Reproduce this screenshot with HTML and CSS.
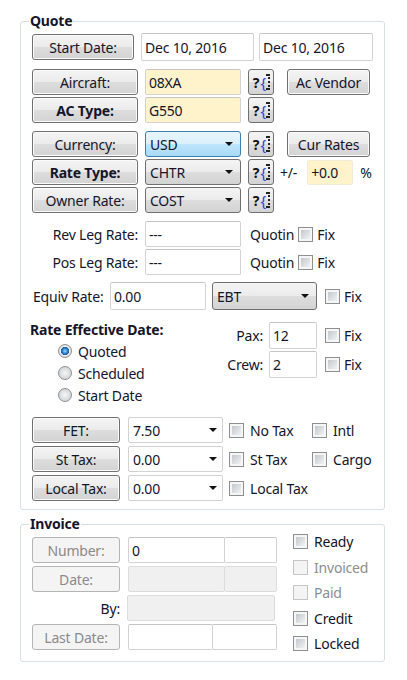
FILE: index.html
```html
<!DOCTYPE html>
<html lang="en">
<head>
    <meta charset="UTF-8">
    <meta name="viewport" content="width=device-width, initial-scale=1.0">
    <title>Quote</title>
    <link rel="stylesheet" href="styles.css">
</head>
<body>
    <fieldset class="group quote">
        <legend>Quote</legend>

        <div class="row">
            <button class="btn w-btn">Start Date:</button>
            <input class="txt w-date" value="Dec 10, 2016">
            <input class="txt w-date2" value="Dec 10, 2016">
        </div>

        <div class="stack sec">
            <div class="row">
                <button class="btn w-btn">Aircraft:</button>
                <input class="txt yellow w-field" value="08XA">
                <button class="qbtn">?<span class="brace">{</span><span class="dots"></span></button>
                <button class="btn w-side">Ac Vendor</button>
            </div>
            <div class="row">
                <button class="btn w-btn bold">AC Type:</button>
                <input class="txt yellow w-field" value="G550">
                <button class="qbtn">?<span class="brace">{</span><span class="dots"></span></button>
            </div>
        </div>

        <div class="stack sec">
            <div class="row">
                <button class="btn w-btn">Currency:</button>
                <div class="combo focus w-field"><span>USD</span><i class="arrow"></i></div>
                <button class="qbtn">?<span class="brace">{</span><span class="dots"></span></button>
                <button class="btn w-side">Cur Rates</button>
            </div>
            <div class="row">
                <button class="btn w-btn bold">Rate Type:</button>
                <div class="combo w-field"><span>CHTR</span><i class="arrow"></i></div>
                <button class="qbtn">?<span class="brace">{</span><span class="dots"></span></button>
                <span class="pm">+/-</span>
                <input class="txt yellow w-pct" value="+0.0">
                <span class="pct">%</span>
            </div>
            <div class="row">
                <button class="btn w-btn">Owner Rate:</button>
                <div class="combo w-field"><span>COST</span><i class="arrow"></i></div>
                <button class="qbtn">?<span class="brace">{</span><span class="dots"></span></button>
            </div>
        </div>

        <div class="stack sec">
            <div class="row">
                <label class="lbl w-btn">Rev Leg Rate:</label>
                <input class="txt w-field" value="---">
                <span class="quotin">Quotin</span>
                <span class="cb"></span><span class="cb-text">Fix</span>
            </div>
            <div class="row">
                <label class="lbl w-btn">Pos Leg Rate:</label>
                <input class="txt w-field" value="---">
                <span class="quotin">Quotin</span>
                <span class="cb"></span><span class="cb-text">Fix</span>
            </div>
        </div>

        <div class="row equiv">
            <label class="equiv-lbl">Equiv Rate:</label>
            <input class="txt w-equiv" value="0.00">
            <div class="combo w-ebt"><span>EBT</span><i class="arrow"></i></div>
            <span class="cb ml8"></span><span class="cb-text">Fix</span>
        </div>

        <div class="rate-block">
            <div class="rate-left">
                <div class="rate-title">Rate Effective Date:</div>
                <div class="radios">
                    <div class="radio-row"><span class="radio on"></span>Quoted</div>
                    <div class="radio-row"><span class="radio"></span>Scheduled</div>
                    <div class="radio-row"><span class="radio"></span>Start Date</div>
                </div>
            </div>
            <div class="stack rate-right">
                <div class="row">
                    <label class="lbl w-small">Pax:</label>
                    <input class="txt w-pax" value="12">
                    <span class="cb ml8"></span><span class="cb-text">Fix</span>
                </div>
                <div class="row">
                    <label class="lbl w-small">Crew:</label>
                    <input class="txt w-pax" value="2">
                    <span class="cb ml8"></span><span class="cb-text">Fix</span>
                </div>
            </div>
        </div>

        <div class="stack tax">
            <div class="row">
                <button class="btn w-tax">FET:</button>
                <div class="combo flat w-taxsel"><span>7.50</span><i class="arrow"></i></div>
                <div class="check w-c1"><span class="cb"></span><span class="cb-text">No Tax</span></div>
                <div class="check"><span class="cb"></span><span class="cb-text">Intl</span></div>
            </div>
            <div class="row">
                <button class="btn w-tax">St Tax:</button>
                <div class="combo flat w-taxsel"><span>0.00</span><i class="arrow"></i></div>
                <div class="check w-c1"><span class="cb"></span><span class="cb-text">St Tax</span></div>
                <div class="check"><span class="cb"></span><span class="cb-text">Cargo</span></div>
            </div>
            <div class="row">
                <button class="btn w-tax">Local Tax:</button>
                <div class="combo flat w-taxsel"><span>0.00</span><i class="arrow"></i></div>
                <div class="check w-c1"><span class="cb"></span><span class="cb-text">Local Tax</span></div>
            </div>
        </div>
    </fieldset>

    <fieldset class="group invoice">
        <legend>Invoice</legend>
        <div class="inv-body">
            <div class="inv-left">
                <div class="row">
                    <button class="btn w-tax off">Number:</button>
                    <div class="pair">
                        <input class="txt w-n1" value="0">
                        <input class="txt w-n2" value="">
                    </div>
                </div>
                <div class="row">
                    <button class="btn w-tax off">Date:</button>
                    <div class="pair">
                        <input class="txt grey w-n1" value="">
                        <input class="txt grey w-n2" value="">
                    </div>
                </div>
                <div class="row">
                    <label class="lbl w-tax">By:</label>
                    <input class="txt grey w-by" value="">
                </div>
                <div class="row">
                    <button class="btn w-tax off">Last Date:</button>
                    <div class="pair">
                        <input class="txt w-l1" value="">
                        <input class="txt w-l2" value="">
                    </div>
                </div>
            </div>
            <div class="inv-right">
                <div class="check"><span class="cb"></span><span class="cb-text">Ready</span></div>
                <div class="check dim"><span class="cb"></span><span class="cb-text">Invoiced</span></div>
                <div class="check dim"><span class="cb"></span><span class="cb-text">Paid</span></div>
                <div class="check"><span class="cb"></span><span class="cb-text">Credit</span></div>
                <div class="check"><span class="cb"></span><span class="cb-text">Locked</span></div>
            </div>
        </div>
    </fieldset>
</body>
</html>
```

FILE: styles.css
```css
* {
    box-sizing: border-box;
}

body {
    margin: 0;
    padding: 0 0 0 20px;
    font-family: "Noto Sans", sans-serif;
    font-size: 14px;
    letter-spacing: -0.2px;
    color: #15152a;
    background: #fff;
}

/* group boxes */
.group {
    width: 365px;
    min-width: 0;
    margin: 13px 0 0;
    padding: 4px 11px 8px;
    border: 1px solid #d5dfe5;
    border-radius: 3px;
}

.group legend {
    margin-left: -3px;
    padding: 0 1px;
    font-weight: bold;
    line-height: 16px;
}

.invoice {
    margin-top: 6px;
    padding: 0 11px 4px;
}

.row {
    display: flex;
    align-items: center;
}

.stack {
    display: flex;
    flex-direction: column;
    gap: 2px;
}

.sec {
    margin-top: 8px;
}

/* buttons */
.btn {
    height: 26px;
    padding: 0;
    margin-right: 7px;
    font: inherit;
    color: inherit;
    letter-spacing: inherit;
    border: 1px solid #707070;
    border-radius: 3px;
    background: linear-gradient(#f4f4f4, #ebebeb 50%, #dddddd 51%, #d3d3d3);
    box-shadow: inset 0 0 0 1px #fbfbfb;
}

.bold {
    font-weight: bold;
}

.btn.off {
    color: #8a8a8a;
    border-color: #b4b4b4;
    background: #f4f4f4;
    box-shadow: none;
}

.w-btn { width: 106px; }
.w-side { width: 83px; margin: 0 0 0 13px; }
.w-tax { width: 88px; margin-right: 8px; }

.qbtn {
    display: flex;
    align-items: center;
    justify-content: center;
    width: 26px;
    height: 26px;
    padding: 0 0 0 1px;
    font: bold 14px "Noto Sans", sans-serif;
    color: #111;
    border: 1px solid #707070;
    border-radius: 3px;
    background: linear-gradient(#f4f4f4, #ebebeb 50%, #dddddd 51%, #d3d3d3);
}

.qbtn .brace {
    color: #2f3fe0;
    font-weight: normal;
    font-size: 15px;
    margin-left: 1px;
}

.qbtn .dots {
    width: 4px;
    height: 16px;
    border: 2px dotted #222;
    border-left: none;
}

/* text fields */
.txt {
    height: 26px;
    margin: 0;
    padding: 0 3px;
    font: inherit;
    color: inherit;
    letter-spacing: inherit;
    border: 1px solid #d2d2d2;
    border-top-color: #c4c4c4;
    border-radius: 2px;
    background: #fff;
    outline: none;
}

.yellow { background: #fff3cc; }
.grey { background: #f0f0f0; border-color: #dcdcdc; }

.w-date { width: 113px; height: 28px; margin-right: 5px; }
.w-date2 { width: 114px; height: 28px; }
.w-field { width: 96px; margin-right: 7px; }
.w-pct { width: 46px; height: 25px; margin: 0 7px 0 0; border-color: #f2ecd8; }
.w-equiv { width: 96px; height: 28px; margin-right: 6px; }
.w-pax { width: 48px; height: 27px; }

.pm {
    margin: 0 10px 0 6px;
}

/* combos */
.combo {
    display: flex;
    align-items: center;
    justify-content: space-between;
    height: 26px;
    padding: 0 7px 0 4px;
    border: 1px solid #707070;
    border-radius: 3px;
    background: linear-gradient(#f4f4f4, #ebebeb 50%, #dddddd 51%, #d3d3d3);
}

.combo.focus {
    border-color: #3c7fb1;
    background: linear-gradient(#eaf6fd, #d9f0fc 50%, #bee6fd 51%, #a7d9f5);
}

.combo.flat {
    border: 1px solid #d2d2d2;
    border-radius: 2px;
    background: #fff;
    padding-right: 5px;
}

.arrow {
    width: 0;
    height: 0;
    border-left: 4px solid transparent;
    border-right: 4px solid transparent;
    border-top: 4px solid #111;
}

.w-ebt { width: 105px; height: 28px; }
.w-taxsel { width: 95px; margin-right: 6px; }

/* labels */
.lbl {
    text-align: right;
    margin-right: 7px;
}

.w-small {
    width: 48px;
    margin-right: 6px;
}

.quotin {
    margin: 0 4px 0 2px;
}

.equiv {
    margin-top: 7px;
}

.equiv-lbl {
    margin: 0 6px 0 1px;
    width: 71px;
    white-space: nowrap;
}

/* checkboxes */
.cb {
    display: inline-block;
    flex: none;
    width: 15px;
    height: 15px;
    padding: 2px;
    border: 1px solid #8e8f8f;
    background: linear-gradient(135deg, #c3c7cc, #f1f2f3) content-box, #f6f6f6;
}

.cb-text {
    margin-left: 4px;
}

.ml8 {
    margin-left: 8px;
}

.check {
    display: flex;
    align-items: center;
}

.check .cb-text {
    margin-left: 6px;
}

.w-c1 {
    width: 83px;
}

.dim {
    color: #8d8d8d;
}

.dim .cb {
    border-color: #c5c5c5;
    background: #f4f4f4;
}

/* rate effective */
.rate-block {
    display: flex;
    margin-top: 11px;
}

.rate-left {
    width: 183px;
}

.rate-title {
    margin-left: -2px;
    font-weight: bold;
    line-height: 17px;
    white-space: nowrap;
}

.radios {
    margin-top: 2px;
    padding-left: 26px;
}

.radio-row {
    display: flex;
    align-items: center;
    height: 22px;
}

.radio {
    width: 14px;
    height: 14px;
    margin-right: 6px;
    border: 1px solid #8e8f8f;
    border-radius: 50%;
    background: radial-gradient(circle, #f6f6f6 0, #d4d6d9 6px);
}

.radio.on {
    background: radial-gradient(circle, #9fd8f8 0, #2c86d2 2.5px, #1c5a9c 3.8px, #f6f6f6 4.5px, #d4d6d9 6px);
}

.rate-right {
    padding-top: 1px;
}

.tax {
    margin-top: 11px;
    gap: 3px;
}

/* invoice */
.inv-body {
    display: flex;
}

.inv-left {
    display: flex;
    flex-direction: column;
    gap: 3px;
    margin-top: 5px;
}

.pair {
    display: flex;
}

.pair .txt + .txt {
    margin-left: -1px;
}

.w-n1 { width: 97px; }
.w-n2 { width: 53px; }
.w-by { width: 148px; }
.w-l1 { width: 85px; }
.w-l2 { width: 65px; }

.inv-right {
    margin: -3px 0 0 16px;
}

.inv-right .check {
    height: 25.5px;
}
```
